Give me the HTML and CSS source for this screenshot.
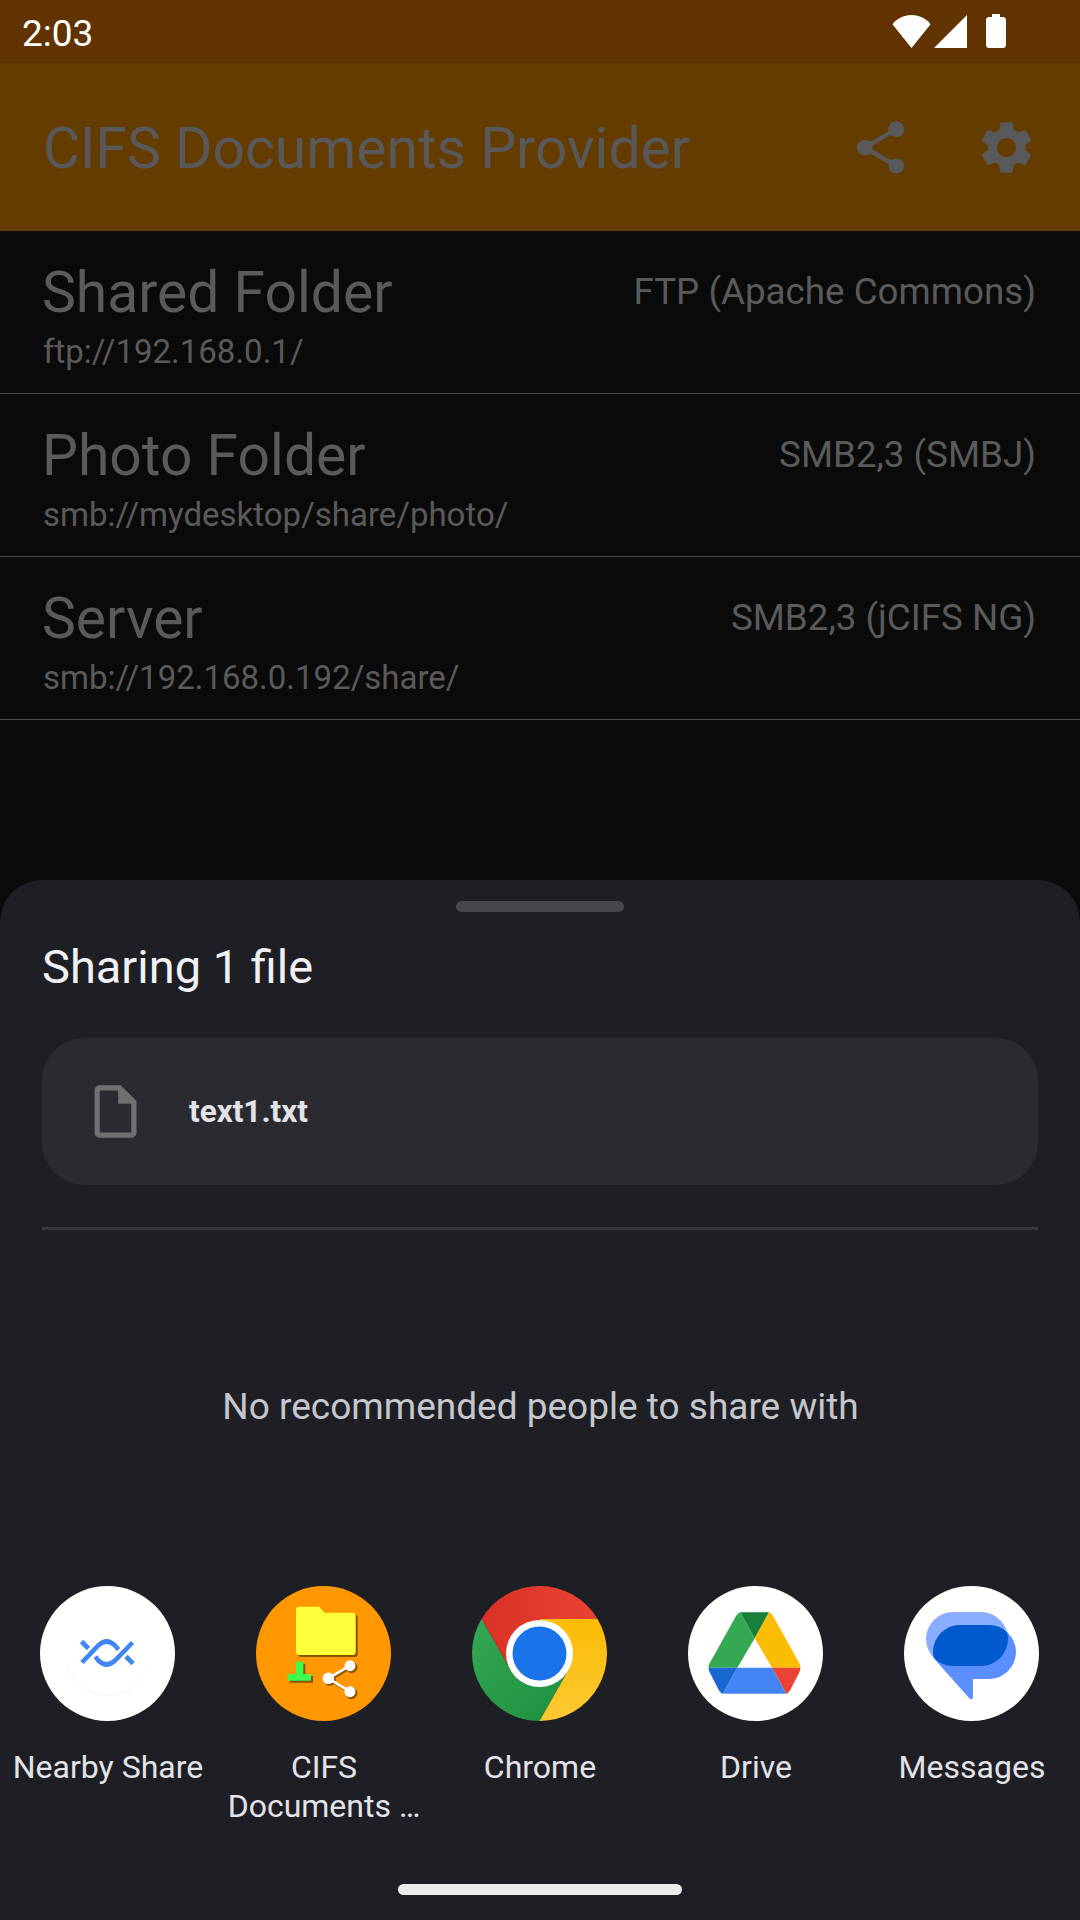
FILE: index.html
```html
<!DOCTYPE html>
<html lang="en">
<head>
    <meta charset="UTF-8">
    <meta name="viewport" content="width=device-width, initial-scale=1.0">
    <title>CIFS Documents Provider</title>
    <link rel="stylesheet" href="styles.css">
</head>
<body>

    <div class="status-bar">
        <span class="time">2:03</span>
        <div class="status-icons">
            <svg class="wifi" viewBox="0 0 39 33"><path d="M19.5 33 0.6 9.5C2 6 10 0 19.5 0S37 6 38.4 9.5z"/></svg>
            <svg class="signal" viewBox="0 0 33 33"><path d="M33 0V33H0z"/></svg>
            <svg class="battery" viewBox="0 0 20 34"><path d="M6 0h8v3h3c1.700 0 3 1.300 3 3v25c0 1.700-1.300 3-3 3H3c-1.700 0-3-1.300-3-3V6c0-1.700 1.300-3 3-3h3z"/></svg>
        </div>
    </div>

    <header class="app-bar">
        <h1>CIFS Documents Provider</h1>
        <div class="actions">
            <svg viewBox="0 0 24 24"><path d="M18 16.080c-.76 0-1.440.3-1.960.77L8.910 12.700c.05-.23.09-.46.09-.7s-.04-.47-.09-.7l7.050-4.110c.54.5 1.250.81 2.040.81 1.660 0 3-1.340 3-3s-1.340-3-3-3-3 1.340-3 3c0 .24.04.47.09.7L8.040 9.810C7.500 9.310 6.790 9 6 9c-1.660 0-3 1.340-3 3s1.340 3 3 3c.79 0 1.500-.31 2.040-.81l7.120 4.160c-.05.21-.08.43-.08.65 0 1.610 1.310 2.920 2.920 2.920 1.610 0 2.920-1.310 2.920-2.920s-1.310-2.920-2.920-2.920z"/></svg>
            <svg viewBox="0 0 24 24"><path d="M19.140 12.940c.04-.3.06-.61.06-.94 0-.32-.02-.64-.07-.94l2.030-1.580c.18-.14.23-.41.12-.61l-1.920-3.320c-.12-.22-.37-.29-.59-.22l-2.390.96c-.5-.38-1.030-.7-1.620-.94l-.36-2.540c-.04-.24-.24-.41-.48-.41h-3.840c-.24 0-.43.17-.47.41l-.36 2.540c-.59.24-1.130.57-1.620.94l-2.390-.96c-.22-.08-.47 0-.59.22L2.740 8.870c-.12.21-.08.47.12.61l2.030 1.580c-.05.3-.09.63-.09.94s.02.64.07.94l-2.030 1.580c-.18.14-.23.41-.12.61l1.920 3.320c.12.22.37.29.59.22l2.390-.96c.5.38 1.030.7 1.620.94l.36 2.540c.05.24.24.41.48.41h3.840c.24 0 .44-.17.47-.41l.36-2.540c.59-.24 1.130-.56 1.620-.94l2.390.96c.22.08.47 0 .59-.22l1.920-3.320c.12-.22.07-.47-.12-.61l-2.010-1.580zM12 15.600c-1.980 0-3.600-1.620-3.600-3.600s1.620-3.600 3.600-3.600 3.600 1.620 3.600 3.600-1.620 3.600-3.600 3.600z"/></svg>
        </div>
    </header>

    <main class="connections">
        <div class="row">
            <div class="row-top">
                <span class="row-name">Shared Folder</span>
                <span class="row-type">FTP (Apache Commons)</span>
            </div>
            <div class="row-uri">ftp://192.168.0.1/</div>
        </div>
        <div class="row">
            <div class="row-top">
                <span class="row-name">Photo Folder</span>
                <span class="row-type">SMB2,3 (SMBJ)</span>
            </div>
            <div class="row-uri">smb://mydesktop/share/photo/</div>
        </div>
        <div class="row">
            <div class="row-top">
                <span class="row-name">Server</span>
                <span class="row-type">SMB2,3 (jCIFS NG)</span>
            </div>
            <div class="row-uri">smb://192.168.0.192/share/</div>
        </div>
    </main>

    <section class="sheet">
        <div class="handle"></div>
        <h2>Sharing 1 file</h2>

        <div class="file-card">
            <svg viewBox="0 0 24 24"><path d="M14 2H6c-1.100 0-2 .9-2 2v16c0 1.100.9 2 2 2h12c1.100 0 2-.9 2-2V8l-6-6zM6 20V4h7v5h5v11H6z"/></svg>
            <span>text1.txt</span>
        </div>

        <div class="sheet-divider"></div>

        <p class="no-people">No recommended people to share with</p>

        <div class="targets">
            <div class="target">
                <svg class="target-icon" viewBox="0 0 135 135">
                    <circle cx="67.500" cy="67.500" r="67.500" fill="#fff"/>
                    <path d="M27 80A42 42 0 0 0 107 80" fill="none" stroke="#ececec" stroke-width=".7"/>
                    <g fill="none" stroke="#4285f4" stroke-width="4.600">
                        <path d="M42 76.500 58.300 59.500Q66.700 51.500 75 59.500L78.500 63.500"/>
                        <path d="M92.500 56.500 75 74.500Q66.700 82.500 58.300 74.500L55.500 70.500"/>
                        <path d="M41.500 55.500 48.500 62.500"/>
                        <path d="M86 70.500 93 77.500"/>
                    </g>
                </svg>
                <span class="target-label">Nearby Share</span>
            </div>
            <div class="target">
                <svg class="target-icon" viewBox="0 0 135 135">
                    <circle cx="67.500" cy="67.500" r="67.500" fill="#ff9800"/>
                    <g fill="#8a5200" transform="translate(2 2)">
                        <path d="M43 20.700H63L69 26.700H97C98.700 26.700 99.700 28 99.700 29.700V66C99.700 67.700 98.700 69 97 69H43C41.300 69 40 67.700 40 66V23.700C40 22 41.300 20.700 43 20.700Z"/>
                        <path d="M40 75.700H47.300V88H55V94.700H31.700V88H40Z"/>
                    </g>
                    <path fill="#ffff3b" d="M43 20.700H63L69 26.700H97C98.700 26.700 99.700 28 99.700 29.700V66C99.700 67.700 98.700 69 97 69H43C41.300 69 40 67.700 40 66V23.700C40 22 41.300 20.700 43 20.700Z"/>
                    <path fill="#3dfc4c" d="M40 75.700H47.300V88H55V94.700H31.700V88H40Z"/>
                    <g fill="#8a5200" stroke="#8a5200" transform="translate(1.500 1.500)">
                        <path d="M94 79.700 72.300 92.300 94 105.700" fill="none" stroke-width="2.600"/>
                        <circle cx="94" cy="79.700" r="5.500"/>
                        <circle cx="72.300" cy="92.300" r="5.500"/>
                        <circle cx="94" cy="105.700" r="5.500"/>
                    </g>
                    <g fill="#fff">
                        <path d="M94 79.700 72.300 92.300 94 105.700" fill="none" stroke="#fff" stroke-width="2.600"/>
                        <circle cx="94" cy="79.700" r="5.500"/>
                        <circle cx="72.300" cy="92.300" r="5.800"/>
                        <circle cx="94" cy="105.700" r="5.500"/>
                    </g>
                </svg>
                <span class="target-label">CIFS<br>Documents …</span>
            </div>
            <div class="target">
                <svg class="target-icon" viewBox="0 0 135 135">
                    <defs>
                        <linearGradient id="chromeRed" x1="0" x2="1" y1="0" y2="0"><stop offset="0" stop-color="#d93025"/><stop offset="1" stop-color="#ea4335"/></linearGradient>
                        <linearGradient id="chromeGreen" x1="0" x2="1" y1="0" y2="1"><stop offset="0" stop-color="#34a853"/><stop offset="1" stop-color="#1e8e3e"/></linearGradient>
                        <linearGradient id="chromeYellow" x1="0" x2="0" y1="0" y2="1"><stop offset="0" stop-color="#fbbc04"/><stop offset="1" stop-color="#fcc934"/></linearGradient>
                    </defs>
                    <path fill="url(#chromeRed)" d="M9.500 33A67.500 67.500 0 0 1 125.500 33H67.500L38.500 84Z"/>
                    <path fill="url(#chromeGreen)" d="M9.500 33A67.500 67.500 0 0 0 67.500 135L96.500 84H38.500Z"/>
                    <path fill="url(#chromeYellow)" d="M125.500 33A67.500 67.500 0 0 1 67.500 135L96.500 84 67.500 33Z"/>
                    <circle cx="67.500" cy="67.500" r="33.500" fill="#fff"/>
                    <circle cx="67.500" cy="67.500" r="27" fill="#1a73e8"/>
                </svg>
                <span class="target-label">Chrome</span>
            </div>
            <div class="target">
                <svg class="target-icon" viewBox="0 0 135 135">
                    <circle cx="67.500" cy="67.500" r="67.500" fill="#fff"/>
                    <path fill="#34a853" d="M52.300 26.300 66.700 52.300 49.300 81.700H20.700Q20.400 79.500 21.500 77.500L48 30Q50 27 52.300 26.300Z"/>
                    <path fill="#188038" d="M52.300 26.300H81L66.700 52.300Z"/>
                    <path fill="#fbbc04" d="M81 26.300Q83.500 27 85 30L111.500 77.500Q112.600 79.500 112.300 81.700H84L66.700 52.300Z"/>
                    <path fill="#1967d2" d="M20.700 81.700H49.300L35 107.700Q32.500 107 31 104.500L21.500 86Q20.500 84 20.700 81.700Z"/>
                    <path fill="#4285f4" d="M49.300 81.700H84L98.300 107.700H35Z"/>
                    <path fill="#ea4335" d="M84 81.700H112.300Q112.500 84 111.500 86L102 104.500Q100.500 107 98.300 107.700Z"/>
                </svg>
                <span class="target-label">Drive</span>
            </div>
            <div class="target">
                <svg class="target-icon" viewBox="0 0 135 135">
                    <defs>
                        <clipPath id="frontPill"><rect x="29" y="39" width="83" height="54" rx="27"/></clipPath>
                    </defs>
                    <circle cx="67.500" cy="67.500" r="67.500" fill="#fff"/>
                    <rect x="22" y="26" width="82" height="54" rx="27" fill="#8aaeff"/>
                    <path fill="#5b8eff" d="M56 39H85A27 27 0 0 1 85 93H69V111.500Q68.500 114 66 113L33 76Q29 71 29 66A27 27 0 0 1 56 39Z"/>
                    <rect x="22" y="26" width="82" height="54" rx="27" fill="#0059cd" clip-path="url(#frontPill)"/>
                </svg>
                <span class="target-label">Messages</span>
            </div>
        </div>

        <div class="home-bar"></div>
    </section>

</body>
</html>
```

FILE: styles.css
```css
body {
    font-family: Roboto, sans-serif;
    margin: 0;
    width: 1080px;
    height: 1920px;
    display: flex;
    flex-direction: column;
    background-color: #0a0a0a;
    overflow: hidden;
}

h1, h2, p {
    margin: 0;
    font-weight: 400;
}

.status-bar {
    height: 63px;
    flex-shrink: 0;
    display: flex;
    justify-content: space-between;
    align-items: center;
    padding: 0 74px 0 22px;
    background-color: #603300;
    color: #fff;
}

.time {
    font-size: 37px;
    margin-top: 3px;
}

.status-icons {
    display: flex;
    align-items: center;
    margin-top: -1px;
    fill: #fff;
}

.wifi {
    width: 39px;
    height: 33px;
}

.signal {
    width: 33px;
    height: 33px;
    margin-left: 3px;
}

.battery {
    width: 20px;
    height: 34px;
    margin-left: 19px;
}

.app-bar {
    height: 168px;
    flex-shrink: 0;
    display: flex;
    justify-content: space-between;
    align-items: center;
    padding: 0 42px 0 43px;
    background-color: #643c00;
    color: #59595b;
}

.app-bar h1 {
    font-size: 57px;
    margin-top: 3px;
}

.actions {
    display: flex;
    gap: 63px;
    fill: #59595b;
}

.actions svg {
    width: 63px;
    height: 63px;
}

.connections {
    padding-top: 1px;
}

.row {
    height: 162px;
    box-sizing: border-box;
    padding: 27px 44px 0 42px;
    border-bottom: 1px solid #4a4a4a;
    margin-bottom: 1px;
    color: #5a5a5a;
}

.row-top {
    display: flex;
    justify-content: space-between;
    align-items: flex-start;
}

.row-name {
    font-size: 57px;
    line-height: 68px;
}

.row-type {
    font-size: 36.75px;
    line-height: 66px;
}

.row-uri {
    font-size: 33px;
    line-height: 38px;
    margin: 6px 0 0 1px;
}

.sheet {
    margin-top: auto;
    height: 1040px;
    box-sizing: border-box;
    padding: 21px 42px 0;
    display: flex;
    flex-direction: column;
    background-color: #1e1f24;
    border-radius: 42px 42px 0 0;
}

.handle {
    width: 168px;
    height: 11px;
    align-self: center;
    border-radius: 6px;
    background-color: #45464c;
}

.sheet h2 {
    font-size: 47px;
    line-height: 56px;
    margin-top: 27px;
    color: #f1f1f5;
}

.file-card {
    height: 147px;
    margin-top: 43px;
    flex-shrink: 0;
    display: flex;
    align-items: center;
    gap: 42px;
    padding-left: 42px;
    border-radius: 42px;
    background-color: #2a2b30;
    color: #e3e3e8;
    font-size: 31.5px;
    font-weight: 700;
}

.file-card svg {
    width: 63px;
    height: 63px;
    fill: #707070;
}

.sheet-divider {
    height: 3px;
    margin-top: 42px;
    background-color: #35363a;
}

.no-people {
    margin-top: 154px;
    padding-left: 1px;
    text-align: center;
    font-size: 37px;
    line-height: 46px;
    color: #c6c7cc;
}

.targets {
    display: grid;
    grid-template-columns: repeat(5, 216px);
    margin: 156px -42px 0 -43px;
}

.target {
    display: flex;
    flex-direction: column;
    align-items: center;
    text-align: center;
}

.target-icon {
    width: 135px;
    height: 135px;
}

.target-label {
    margin-top: 27px;
    padding-left: 2px;
    font-size: 32px;
    line-height: 39px;
    color: #e3e3e8;
}

.home-bar {
    width: 284px;
    height: 11px;
    align-self: center;
    margin-top: 58px;
    border-radius: 6px;
    background-color: #ececec;
}
```
